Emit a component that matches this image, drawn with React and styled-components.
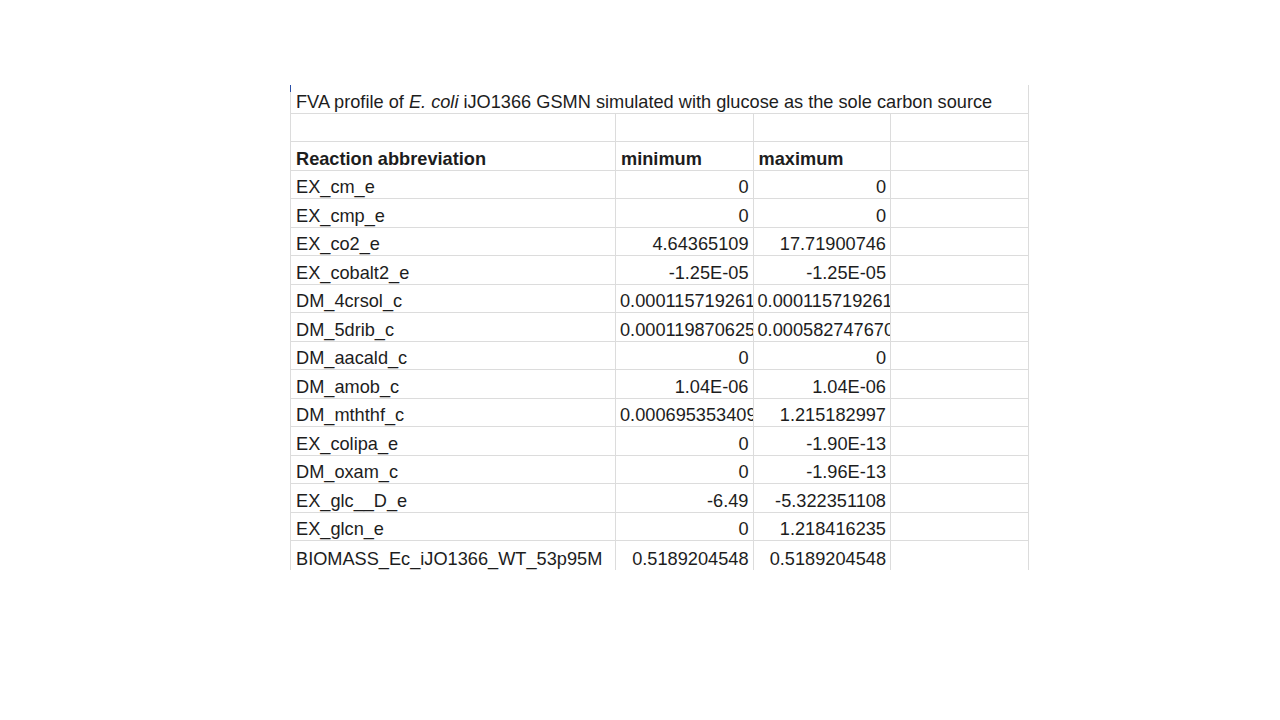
import styled, { createGlobalStyle } from 'styled-components'

const GlobalStyle = createGlobalStyle`
  html, body {
    margin: 0;
    padding: 0;
    background: #ffffff;
  }
  body {
    font-family: "Liberation Sans", Arial, sans-serif;
    color: #1d1d1d;
  }
`

const rows = [
  ['EX_cm_e', '0', '0'],
  ['EX_cmp_e', '0', '0'],
  ['EX_co2_e', '4.64365109', '17.71900746'],
  ['EX_cobalt2_e', '-1.25E-05', '-1.25E-05'],
  ['DM_4crsol_c', '0.000115719261', '0.000115719261'],
  ['DM_5drib_c', '0.000119870625', '0.000582747670'],
  ['DM_aacald_c', '0', '0'],
  ['DM_amob_c', '1.04E-06', '1.04E-06'],
  ['DM_mththf_c', '0.000695353409', '1.215182997'],
  ['EX_colipa_e', '0', '-1.90E-13'],
  ['DM_oxam_c', '0', '-1.96E-13'],
  ['EX_glc__D_e', '-6.49', '-5.322351108'],
  ['EX_glcn_e', '0', '1.218416235'],
  ['BIOMASS_Ec_iJO1366_WT_53p95M', '0.5189204548', '0.5189204548'],
]

// long numbers don't fit in the column, the sheet shows their start and clips the rest
const isLong = (v) => v.length > 12

function App() {
  return (
    <>
      <GlobalStyle />
      <Page>
        <Sheet>
          <TitleCell>
            <span>
              FVA profile of <em>E. coli</em> iJO1366 GSMN simulated with glucose as the sole carbon source
            </span>
          </TitleCell>

          <Cell />
          <Cell />
          <Cell />
          <Cell />

          <Cell bold>Reaction abbreviation</Cell>
          <Cell bold>minimum</Cell>
          <Cell bold>maximum</Cell>
          <Cell />

          {rows.map(([name, min, max], idx) => (
            <Row key={idx} last={idx === rows.length - 1}>
              <Cell>{name}</Cell>
              <Cell numeric clip={isLong(min)}>{min}</Cell>
              <Cell numeric clip={isLong(max)}>{max}</Cell>
              <Cell />
            </Row>
          ))}
        </Sheet>
      </Page>
    </>
  )
}

const Page = styled.div`
  width: 1280px;
  height: 720px;
  padding: 85px 0 0 290px;
  box-sizing: border-box;
`

const Sheet = styled.div`
  position: relative;
  display: grid;
  grid-template-columns: 325px 137.5px 137.5px 138px;
  grid-auto-rows: 28.5px;
  width: max-content;
  border-left: 1px solid #dcdcdc;
  font-size: 18.2px;

  &::before {
    content: '';
    position: absolute;
    left: -1px;
    top: 0;
    width: 1px;
    height: 7px;
    background: #2a4fa8;
  }
`

const Row = styled.div`
  display: contents;

  & > div {
    border-bottom: ${({ last }) => (last ? 'none' : '1px solid #dcdcdc')};
  }
`

const Cell = styled.div`
  box-sizing: border-box;
  display: flex;
  align-items: flex-end;
  justify-content: ${({ numeric, clip }) => (numeric && !clip ? 'flex-end' : 'flex-start')};
  padding: 0 ${({ clip }) => (clip ? '0' : '4px')} 0 ${({ clip }) => (clip ? '4px' : '5px')};
  border-right: 1px solid #dcdcdc;
  border-bottom: 1px solid #dcdcdc;
  font-weight: ${({ bold }) => (bold ? 700 : 400)};
  white-space: nowrap;
  overflow: hidden;
  line-height: 21px;
`

const TitleCell = styled(Cell)`
  grid-column: 1 / -1;

  em {
    font-style: italic;
  }
`

export default App
